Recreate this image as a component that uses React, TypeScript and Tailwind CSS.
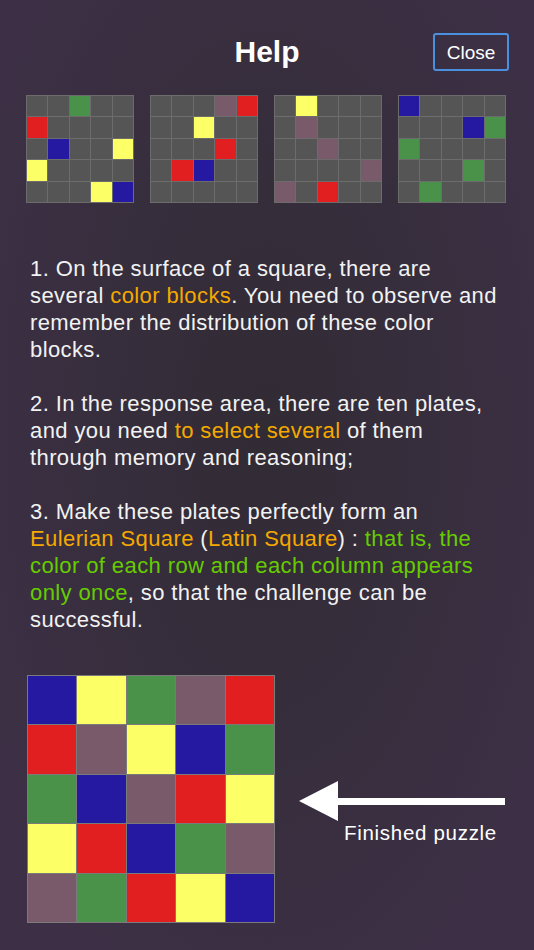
import React from "react";

// colour keys for the plates
const C: Record<string, string> = {
  ".": "bg-[#555555]",
  B: "bg-[#2419a0]",
  Y: "bg-[#fdff66]",
  G: "bg-[#4a9249]",
  P: "bg-[#795a6b]",
  R: "bg-[#e11f21]",
};

const plates = [
  ["..G..", "R....", ".B..Y", "Y....", "...YB"],
  ["...PR", "..Y..", "...R.", ".RB..", "....."],
  [".Y...", ".P...", "..P..", "....P", "P.R.."],
  ["B....", "...BG", "G....", "...G.", ".G..."],
];

const solved = ["BYGPR", "RPYBG", "GBPRY", "YRBGP", "PGRYB"];

function Plate({ rows, big }: { rows: string[]; big?: boolean }) {
  return (
    <div
      className={
        big
          ? "grid h-[248px] w-[248px] grid-cols-5 grid-rows-5 gap-px bg-[#7a7a7a] p-px"
          : "grid h-[108px] w-[108px] grid-cols-5 grid-rows-5 gap-px bg-[#6c6c6c] p-px"
      }
    >
      {rows.flatMap((r, i) => r.split("").map((c, j) => <div key={`${i}-${j}`} className={C[c]} />))}
    </div>
  );
}

const Or = ({ children }: { children: React.ReactNode }) => <span className="text-[#f5a900]">{children}</span>;
const Gr = ({ children }: { children: React.ReactNode }) => <span className="text-[#66cc00]">{children}</span>;

export default function App() {
  return (
    <div
      className="h-[950px] w-full overflow-hidden bg-[radial-gradient(ellipse_at_50%_45%,#312b34_0%,#372e3d_45%,#3d3046_85%)] text-white"
      style={{ fontFamily: '"Liberation Sans", Arial, sans-serif' }}
    >
      <div className="relative flex h-[104px] items-center justify-center pb-[2px]">
        <h1 className="text-[30px] font-bold">Help</h1>
        <button className="absolute right-[25px] top-[33px] h-[38px] w-[76px] rounded-[3px] border-2 border-[#4a8fe0] text-[19px] leading-none">
          Close
        </button>
      </div>

      <div className="-mt-[9px] flex justify-center gap-[16px] pr-[2px]">
        {plates.map((p, i) => (
          <Plate key={i} rows={p} />
        ))}
      </div>

      <div className="mt-[52px] space-y-[27px] whitespace-nowrap pl-[30px] text-[22px] leading-[27px] tracking-[0.4px] text-[#f2f2f2]">
        <p>
          1. On the surface of a square, there are
          <br />
          several <Or>color blocks</Or>. You need to observe and
          <br />
          remember the distribution of these color
          <br />
          blocks.
        </p>
        <p>
          2. In the response area, there are ten plates,
          <br />
          and you need <Or>to select several</Or> of them
          <br />
          through memory and reasoning;
        </p>
        <p>
          3. Make these plates perfectly form an
          <br />
          <Or>Eulerian Square</Or> (<Or>Latin Square</Or>) : <Gr>that is, the</Gr>
          <br />
          <Gr>color of each row and each column appears</Gr>
          <br />
          <Gr>only once</Gr>, so that the challenge can be
          <br />
          successful.
        </p>
      </div>

      <div className="mt-[42px] flex items-start pl-[27px]">
        <Plate rows={solved} big />
        <div className="ml-[24px] mt-[106px] flex flex-col">
          <svg width="206" height="40" viewBox="0 0 206 40">
            <polygon points="0,20 39,0 39,40" fill="#ffffff" />
            <rect x="38" y="17" width="168" height="7" fill="#ffffff" />
          </svg>
          <span className="ml-[45px] mt-[-2px] text-[20.5px] leading-[27px] tracking-[0.7px]">Finished puzzle</span>
        </div>
      </div>
    </div>
  );
}
